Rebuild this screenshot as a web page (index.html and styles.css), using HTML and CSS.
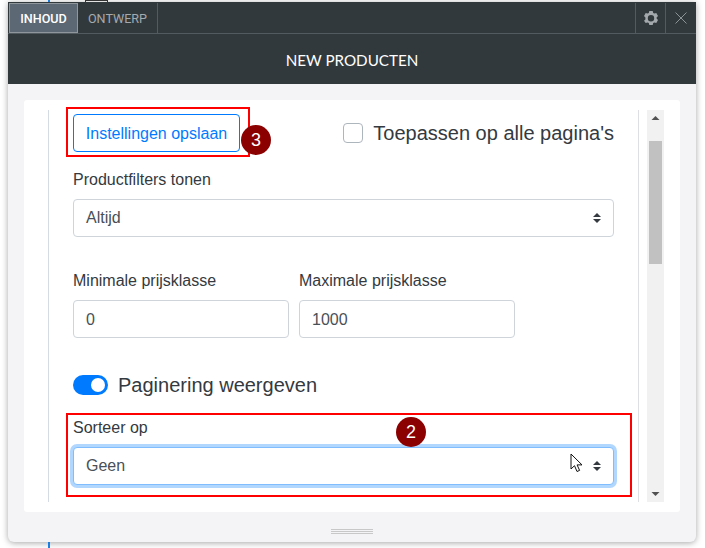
FILE: index.html
```html
<!DOCTYPE html>
<html lang="nl">
<head>
<meta charset="utf-8">
<title>New producten</title>
<link rel="stylesheet" href="styles.css">
</head>
<body>
<span class="peek peek-line-top"></span>
<span class="peek peek-box"></span>
<span class="peek peek-line-bottom"></span>
<main class="window">
  <header class="tabbar">
    <span class="tab tab-active">INHOUD</span>
    <span class="tab">ONTWERP</span>
    <span class="tabbar-fill"></span>
    <span class="tool">
      <svg width="16" height="16" viewBox="0 0 16 16"><path class="gear" fill-rule="evenodd" d="M6.300 1h3.400l.5 1.900 1.200.7 1.900-.5 1.700 2.900-1.400 1.400v1.200l1.400 1.400-1.700 2.900-1.900-.5-1.200.7-.5 1.900H6.300l-.5-1.900-1.200-.7-1.900.5L1 10.800l1.400-1.400V7.400L1 6l1.700-2.900 1.900.5 1.200-.7zM8 5a3.200 3.200 0 1 0 0 6.400A3.200 3.200 0 0 0 8 5z"/></svg>
    </span>
    <span class="tool tool-close">
      <svg width="14" height="14" viewBox="0 0 14 14"><path class="cross" d="M1.500 1.500l11 11M12.500 1.500l-11 11"/></svg>
    </span>
  </header>
  <div class="titlebar">NEW PRODUCTEN</div>
  <div class="body">
    <div class="card">
      <form class="panel">
        <div class="row-top">
          <button type="button" class="btn">Instellingen opslaan</button>
          <label class="check"><span class="checkbox"></span>Toepassen op alle pagina's</label>
        </div>
        <div class="field field-filter">
          <div class="label">Productfilters tonen</div>
          <div class="select">Altijd
            <svg class="caret" width="10" height="12" viewBox="0 0 10 12"><path d="M5 1l4 4H1zM5 11L1 7h8z"/></svg>
          </div>
        </div>
        <div class="price-row">
          <div class="price">
            <div class="label">Minimale prijsklasse</div>
            <input class="input" value="0">
          </div>
          <div class="price">
            <div class="label">Maximale prijsklasse</div>
            <input class="input" value="1000">
          </div>
        </div>
        <div class="switch-row"><span class="switch"><span class="knob"></span></span>Paginering weergeven</div>
        <div class="field field-sort">
          <div class="label">Sorteer op</div>
          <div class="select select-focus">Geen
            <svg class="caret" width="10" height="12" viewBox="0 0 10 12"><path d="M5 1l4 4H1zM5 11L1 7h8z"/></svg>
          </div>
        </div>
      </form>
      <div class="scrollbar">
        <svg class="arrow" width="17" height="17" viewBox="0 0 17 17"><path d="M8.500 6l4 4h-8z"/></svg>
        <div class="thumb"></div>
        <svg class="arrow arrow-end" width="17" height="17" viewBox="0 0 17 17"><path d="M8.500 11l-4-4h8z"/></svg>
      </div>
    </div>
    <div class="grip"></div>
  </div>
</main>
<div class="mark mark-save"></div>
<div class="mark mark-sort"></div>
<div class="badge badge-save">3</div>
<div class="badge badge-sort">2</div>
<svg class="cursor" width="14" height="20" viewBox="0 0 14 20"><path d="M1 1v15l3.500-3.300 2.500 5.800 2.600-1.100-2.500-5.500H12z"/></svg>
</body>
</html>
```
FILE: styles.css
```css
* { box-sizing: border-box; }
html, body { margin: 0; height: 100%; }
body {
  width: 705px;
  height: 548px;
  padding: 2px 9px 6px 8px;
  background: #fff;
  font-family: "Liberation Sans", Arial, sans-serif;
  font-size: 16px;
  color: #495057;
  overflow: hidden;
  position: relative;
}
.peek { position: absolute; }
.peek-line-top { left: 48px; top: 0; width: 2px; height: 2px; background: #1a7fe0; }
.peek-line-bottom { left: 48px; top: 542px; width: 2px; height: 6px; background: #1a7fe0; }
.peek-box { left: 85px; top: 0; width: 23px; height: 2px; border-top: 1px solid #333; border-left: 1px solid #333; border-right: 1px solid #333; }

.window {
  height: 540px;
  display: flex;
  flex-direction: column;
  background: #f4f4f6;
  border-radius: 0 0 6px 6px;
  box-shadow: 0 1px 6px rgba(0, 0, 0, .35);
}
.tabbar {
  height: 32px;
  display: flex;
  background: #32393d;
  border-top: 1px solid #32393d;
  border-bottom: 1px solid #525b60;
  flex: none;
}
.tab {
  width: 80px;
  display: flex;
  align-items: center;
  justify-content: center;
  border-right: 1px solid #525b60;
  font-family: Roboto, sans-serif;
  font-weight: 400;
  font-size: 12.600px;
  color: #a4aaae;
}
.tab-active {
  width: 69px;
  margin-left: 1px;
  background: #5c6873;
  border: 1px solid #8f979d;
  color: #fff;
  font-weight: 500;
}
.tabbar-fill { flex: 1; }
.tool {
  width: 30px;
  display: flex;
  align-items: center;
  justify-content: center;
  border-left: 1px solid #525b60;
}
.tool-close { width: 31px; }
.gear { fill: #a3a9ac; }
.cross { stroke: #8d9498; stroke-width: 1; fill: none; }

.titlebar {
  height: 50px;
  flex: none;
  display: flex;
  align-items: center;
  justify-content: center;
  padding-top: 1px;
  background: #32393d;
  color: #fff;
  font-family: Lato, sans-serif;
  font-size: 15.200px;
}

.body { flex: 1; padding: 16px 16px 0; display: flex; flex-direction: column; }
.card {
  height: 412px;
  flex: none;
  padding: 10px 16px 10px 24px;
  background: #fff;
  border-radius: 3px;
  display: flex;
  gap: 8px;
}
.panel {
  width: 591px;
  padding: 4px 24px 0;
  border-left: 1px solid #d5dbe3;
  border-right: 1px solid #dedfe3;
  overflow: hidden;
}
.row-top { display: flex; justify-content: space-between; align-items: center; height: 38px; }
.btn {
  width: 167px;
  height: 38px;
  padding: 1px 0 0;
  background: #fff;
  border: 1px solid #007bff;
  border-radius: 4px;
  color: #007bff;
  font: inherit;
}
.check { display: flex; align-items: center; gap: 10px; font-size: 20px; color: #343a40; }
.checkbox {
  width: 20px;
  height: 20px;
  background: #fff;
  border: 1px solid #adb5bd;
  border-radius: 4px;
}
.label { height: 24px; line-height: 26px; margin-bottom: 8px; color: #343a40; }
.field-filter { margin-top: 15px; }
.select {
  height: 38px;
  padding: 0 12px;
  display: flex;
  align-items: center;
  justify-content: space-between;
  border: 1px solid #ced4da;
  border-radius: 4px;
  background: #fff;
}
.select-focus {
  border-color: #80bdff;
  box-shadow: 0 0 0 3px rgba(0, 123, 255, .3);
}
.caret { fill: #343a40; margin-right: -1px; }
.price-row { display: flex; gap: 10px; margin-top: 31px; }
.price { width: 216px; }
.input {
  display: block;
  width: 100%;
  height: 38px;
  padding: 2px 12px 0;
  border: 1px solid #ced4da;
  border-radius: 4px;
  font: inherit;
  color: #495057;
}
.switch-row { display: flex; align-items: center; gap: 10px; height: 30px; margin-top: 32px; font-size: 20px; color: #343a40; }
.switch {
  width: 35px;
  height: 20px;
  padding: 3px 3px 3px 18px;
  background: #007bff;
  border-radius: 10px;
}
.knob { display: block; width: 14px; height: 14px; border-radius: 50%; background: #fff; }
.field-sort { margin-top: 15px; }

.scrollbar {
  width: 17px;
  height: 392px;
  background: #f1f1f1;
  display: flex;
  flex-direction: column;
  align-items: center;
}
.arrow { fill: #505050; flex: none; }
.thumb { width: 13px; height: 123px; margin-top: 14px; background: #c1c1c1; }
.arrow-end { margin-top: auto; }
.grip {
  width: 42px;
  height: 5px;
  margin: 17px auto 0;
  border-top: 1px solid #c8c8c8;
  border-bottom: 1px solid #c8c8c8;
  background: linear-gradient(#f4f4f6 0 1px, #c8c8c8 1px 2px, #f4f4f6 2px);
}

.mark { position: absolute; border: 2px solid #f00; }
.mark-save { left: 66px; top: 107px; width: 184px; height: 50px; }
.mark-sort { left: 66px; top: 413px; width: 566px; height: 84px; }
.badge {
  position: absolute;
  width: 30px;
  height: 30px;
  border-radius: 50%;
  background: #8b0000;
  color: #fff;
  font-size: 18px;
  line-height: 30px;
  text-align: center;
}
.badge-save { left: 241px; top: 125px; }
.badge-sort { left: 396px; top: 417px; }
.cursor { position: absolute; left: 570px; top: 453px; fill: #fff; stroke: #111; stroke-width: 1; }
```
